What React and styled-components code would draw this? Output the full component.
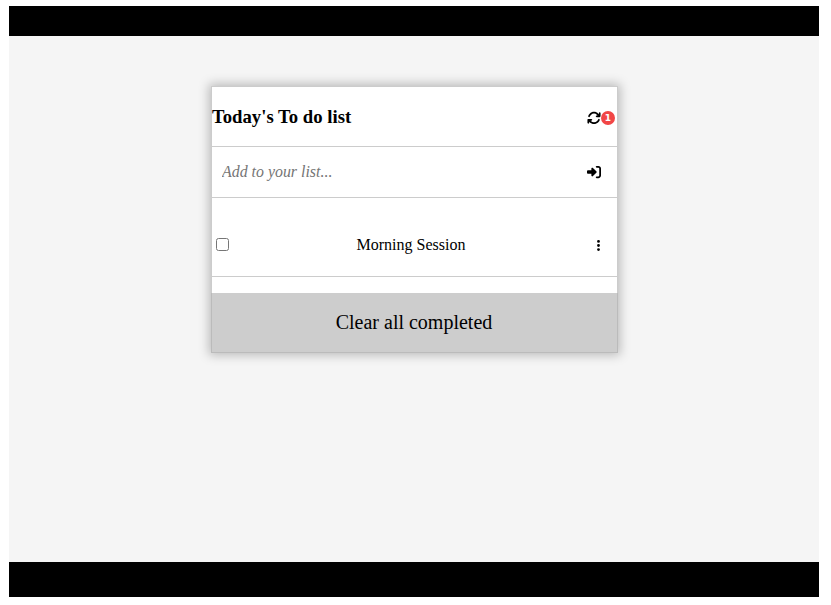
import React from 'react';
import styled, { createGlobalStyle } from 'styled-components';
import { FaArrowsRotate, FaRightToBracket, FaEllipsisVertical } from 'react-icons/fa6';

const GlobalStyle = createGlobalStyle`
  * { box-sizing: border-box; }
  body {
    margin: 0;
    background: #fff;
    color: #000;
    font-family: 'Liberation Serif', 'Times New Roman', serif;
  }
`;

const Page = styled.div`
  display: flex;
  flex-direction: column;
  width: 810px;
  height: 591px;
  margin: 6px 0 0 9px;
`;

const Bar = styled.div`
  height: ${(p) => p.$height}px;
  background: #000;
`;

const Main = styled.main`
  flex: 1;
  padding: 50px 0 0 202px;
  background: #f5f5f5;
`;

const Card = styled.section`
  display: flex;
  flex-direction: column;
  width: 407px;
  height: 267px;
  border: 1px solid #ccc;
  background: #fff;
  box-shadow: 0 0 10px 2px rgba(0, 0, 0, 0.25);
`;

const Row = styled.div`
  display: flex;
  align-items: center;
  justify-content: space-between;
  height: ${(p) => p.$height}px;
  padding: ${(p) => p.$padding || '0'};
  border-bottom: 1px solid #ccc;
`;

const Title = styled.h1`
  margin: 0 0 1px;
  font-size: 18.72px;
  line-height: 22px;
`;

const IconGroup = styled.div`
  display: flex;
  align-items: center;
`;

const Badge = styled.span`
  display: flex;
  align-items: center;
  justify-content: center;
  width: 14px;
  height: 14px;
  border-radius: 50%;
  background: #f14646;
  color: #fff;
  font: bold 9px/14px 'DejaVu Sans', sans-serif;
`;

const TaskInput = styled.input`
  width: 340px;
  padding: 0;
  border: 0;
  outline: 0;
  background: transparent;
  font: italic 15.9px/20px 'Liberation Serif', 'Times New Roman', serif;
  &::placeholder { color: #757575; }
`;

const Checkbox = styled.input`
  width: 13px;
  height: 13px;
  margin: 0 0 1px;
`;

const TaskName = styled.span`
  margin-left: 1px;
  font-size: 16px;
  line-height: 20px;
`;

const ClearButton = styled.button`
  height: 60px;
  margin: 16px -1px -1px;
  padding: 0 1px 1px 0;
  border: 1px solid #bbb;
  border-top: 0;
  background: #cdcdcd;
  color: #000;
  font: 20px/24px 'Liberation Serif', 'Times New Roman', serif;
`;

export default function App() {
  return (
    <>
      <GlobalStyle />
      <Page>
        <Bar $height={30} />
        <Main>
          <Card>
            <Row $height={60} $padding="2px 2px 0 0">
              <Title>Today's To do list</Title>
              <IconGroup>
                <FaArrowsRotate size={14} />
                <Badge>1</Badge>
              </IconGroup>
            </Row>
            <Row $height={51} $padding="0 16px 0 10px">
              <TaskInput placeholder="Add to your list..." aria-label="New task" />
              <FaRightToBracket size={14} />
            </Row>
            <Row $height={79} $padding="16px 12px 0 4px">
              <Checkbox type="checkbox" aria-label="Morning Session" />
              <TaskName>Morning Session</TaskName>
              <FaEllipsisVertical size={13} />
            </Row>
            <ClearButton type="button">Clear all completed</ClearButton>
          </Card>
        </Main>
        <Bar $height={35} />
      </Page>
    </>
  );
}
